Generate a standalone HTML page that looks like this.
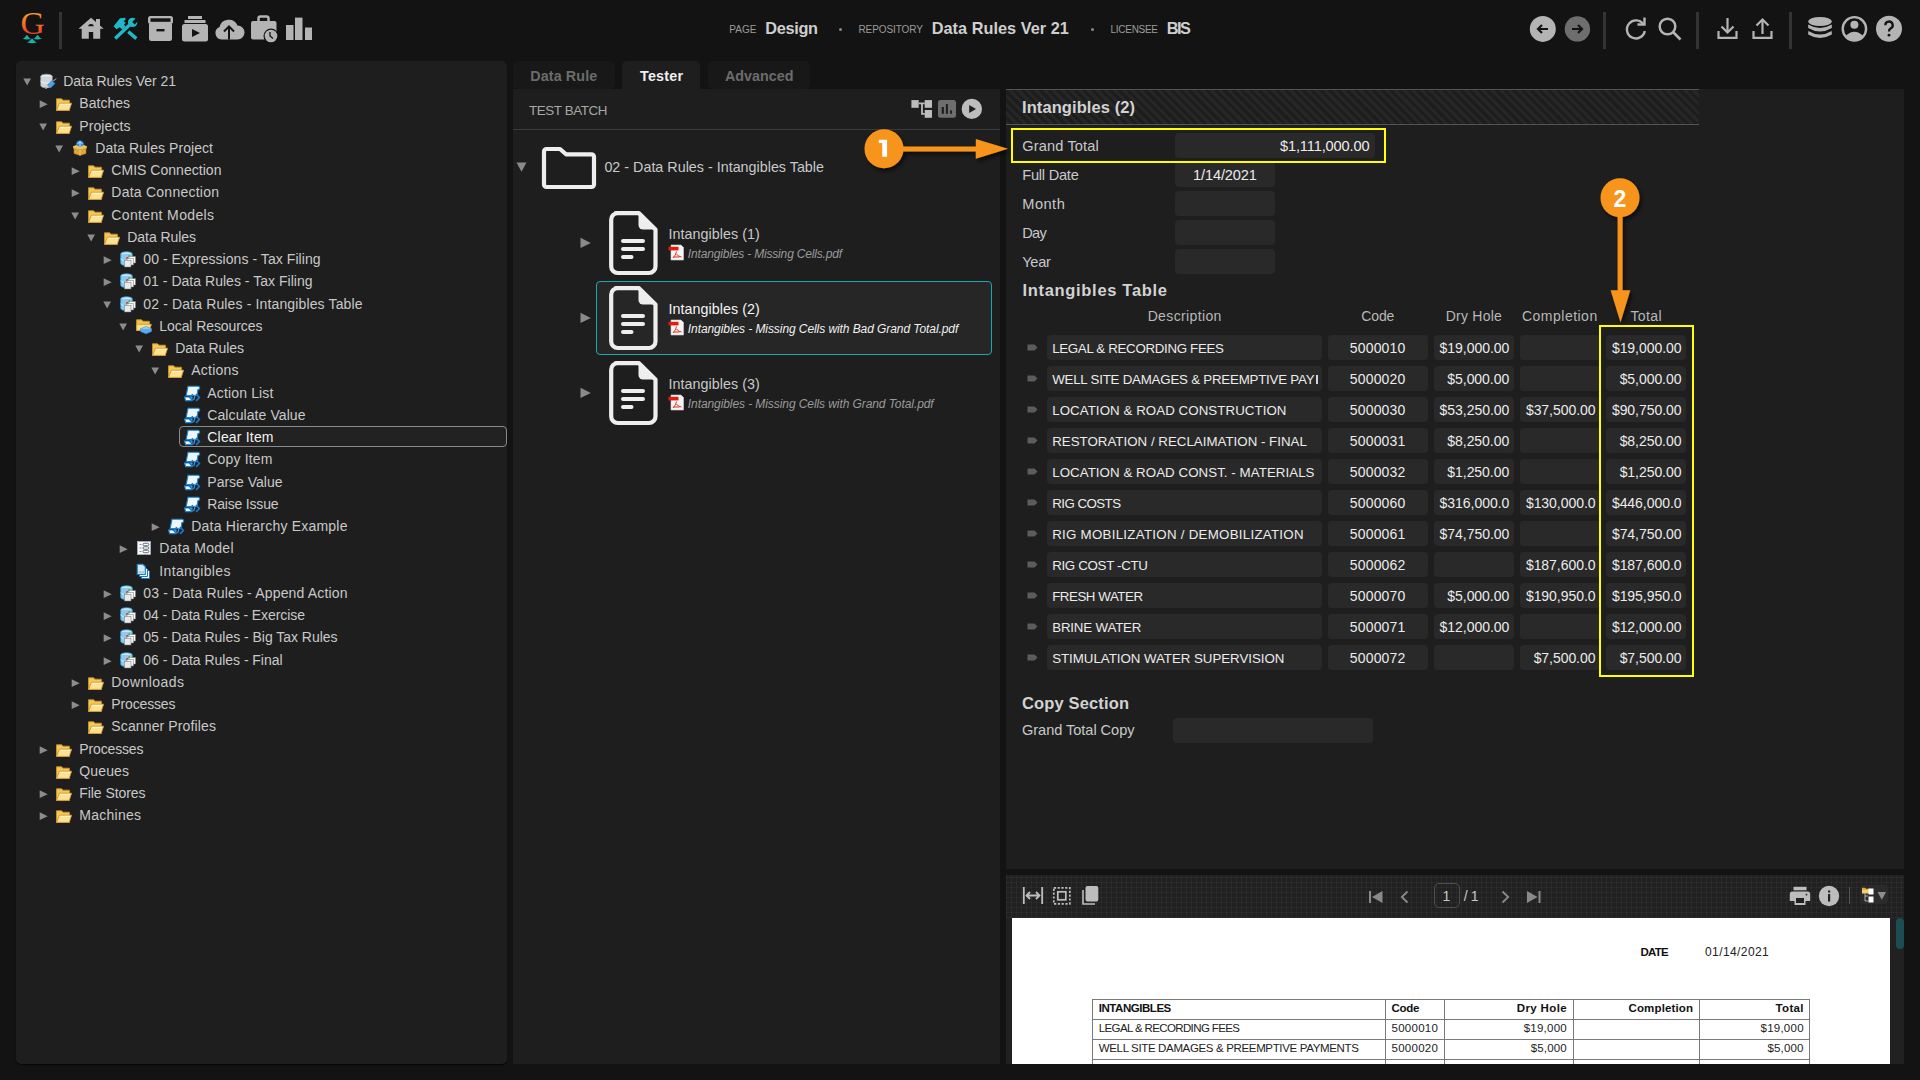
<!DOCTYPE html>
<html><head><meta charset="utf-8"><title>Data Rules</title>
<style>
html,body{margin:0;padding:0;overflow:hidden;background:#131313;}
body{width:1920px;height:1080px;background:#131313;position:relative;overflow:hidden;font-family:"Liberation Sans",sans-serif;}
.a{position:absolute;display:block;}
.t{position:absolute;white-space:pre;line-height:1;}
</style></head><body>
<svg class="a" style="left:16px;top:8px;" width="32" height="40" viewBox="0 0 32 40"><defs><linearGradient id="gg" x1="0" y1="0" x2="0" y2="1"><stop offset="0.15" stop-color="#f7a81e"/><stop offset="0.6" stop-color="#f3622a"/><stop offset="0.95" stop-color="#ea2622"/></linearGradient></defs>
<text transform="translate(4.4,25.8) scale(1.05,1)" x="0" y="0" font-family="Liberation Serif" font-size="32" fill="url(#gg)">G</text>
<path d="M6.5,30.8 C9,30.3 10,27.2 10.9,27 C11.8,27.2 12.8,30.3 15.2,30.8 C12,31.7 9.5,31.7 6.5,30.8Z M17.2,30.8 C19.7,30.3 20.7,27.2 21.6,27 C22.5,27.2 23.5,30.3 26.1,30.8 C22.9,31.7 20.4,31.7 17.2,30.8Z M10.9,34.6 C13.6,34.1 14.9,30.8 16,30.6 C17.1,30.8 18.4,34.1 21.1,34.6 C17.7,35.5 14.3,35.5 10.9,34.6Z" fill="#13b3aa"/></svg>
<div class="a" style="left:59px;top:12px;width:3px;height:37px;background:#333;"></div>
<svg class="a" style="left:78px;top:17px;" width="26" height="23" viewBox="0 0 26 23"><path d="M13,0.8 L18,5.09 V2 H22 V8.5 L25.7,11.7 H22.2 V21.8 H15.2 V15 H10.8 V21.8 H3.7 V11.7 H0.5 Z" fill="#b4b4b4"/><path d="M10.3,9.3 A2.7,2.2 0 0 1 15.7,9.3 Z" fill="#131313"/></svg>
<svg class="a" style="left:113px;top:17px;" width="25" height="24" viewBox="0 0 25 24"><g stroke="#20b8c9" stroke-width="3.4" stroke-linecap="butt" fill="none">
<path d="M2.2,21.6 L16.5,8"/><path d="M15.3,14.6 L23.3,21.6"/></g>
<circle cx="19.6" cy="5.4" r="4.7" fill="#20b8c9"/><path d="M19.2,4.9 L23.5,0.6 L26,3.1 L21.7,7.4Z" fill="#131313"/>
<path d="M0.6,9.3 L7,1.2 L12.3,0.8 L12.6,2.6 L10.6,4.2 L12.6,5.7 L11,7.8 L12.6,9.5 L9.5,12.4 L6.5,10.2 L3.5,12.2Z" fill="#20b8c9"/></svg>
<svg class="a" style="left:147px;top:15px;" width="27" height="28" viewBox="0 0 27 28"><rect x="1" y="1" width="25" height="8" rx="2.5" fill="#b4b4b4"/><rect x="3.5" y="3.3" width="20" height="3.5" fill="#131313"/><path d="M2,8.5 h23 v15 a2.5,2.5 0 0 1 -2.5,2.5 h-18 a2.5,2.5 0 0 1 -2.5,-2.5z" fill="#b4b4b4"/><rect x="9.5" y="14" width="8" height="2.4" fill="#131313"/></svg>
<svg class="a" style="left:181px;top:15px;" width="28" height="28" viewBox="0 0 28 28"><rect x="7" y="1" width="14" height="3" fill="#b4b4b4"/><rect x="3.5" y="5" width="21" height="3" fill="#b4b4b4"/><rect x="1" y="9" width="26" height="17.5" rx="2.5" fill="#b4b4b4"/><path d="M11,14 L19,18 L11,22Z" fill="#131313"/></svg>
<svg class="a" style="left:214px;top:17px;" width="31" height="24" viewBox="0 0 31 24"><path d="M7.5,22.5 A6.5,6.5 0 0 1 5.5,10 A9.5,9.5 0 0 1 23.5,8.5 A6.8,6.8 0 0 1 23.5,22.5 Z" fill="#b4b4b4"/><path d="M15,22.5 V10" stroke="#131313" stroke-width="2"/><path d="M10,14.5 L15,9.5 L20,14.5" stroke="#131313" stroke-width="2" fill="none"/></svg>
<svg class="a" style="left:250px;top:15px;" width="29" height="29" viewBox="0 0 29 29"><path d="M8.5,6 V3.5 a2,2 0 0 1 2,-2 h6 a2,2 0 0 1 2,2 V6" stroke="#b4b4b4" stroke-width="2.5" fill="none"/><rect x="1" y="6" width="25.5" height="18.5" rx="2" fill="#b4b4b4"/><circle cx="21" cy="21" r="7.5" fill="#131313"/><circle cx="21" cy="21" r="6.3" fill="#b4b4b4"/><path d="M20,17 L20,21 L23,23.5" stroke="#131313" stroke-width="1.3" fill="none"/></svg>
<svg class="a" style="left:285px;top:17px;" width="28" height="24" viewBox="0 0 28 24"><rect x="1" y="8" width="7.5" height="15" fill="#b4b4b4"/><rect x="10" y="0.6" width="7.5" height="22.4" fill="#b4b4b4"/><rect x="20" y="10.5" width="7" height="12.5" fill="#b4b4b4"/></svg>
<div class="t" style="left:729.20px;top:24.54px;font-size:10px;color:#9c9c9c;letter-spacing:0.067px;">PAGE</div>
<div class="t" style="left:765.20px;top:20.20px;font-size:16.3px;color:#cfcfcf;font-weight:700;letter-spacing:-0.296px;">Design</div>
<div class="a" style="left:838.5px;top:28px;width:3px;height:3px;background:#888;border-radius:50%;"></div>
<div class="t" style="left:858.50px;top:24.54px;font-size:10px;color:#9c9c9c;letter-spacing:-0.100px;">REPOSITORY</div>
<div class="t" style="left:931.70px;top:20.20px;font-size:16.3px;color:#cfcfcf;font-weight:700;letter-spacing:0.034px;">Data Rules Ver 21</div>
<div class="a" style="left:1090.5px;top:28px;width:3px;height:3px;background:#888;border-radius:50%;"></div>
<div class="t" style="left:1110.60px;top:24.54px;font-size:10px;color:#9c9c9c;letter-spacing:-0.300px;">LICENSEE</div>
<div class="t" style="left:1166.70px;top:20.20px;font-size:16.3px;color:#cfcfcf;font-weight:700;letter-spacing:-1.460px;">BIS</div>
<svg class="a" style="left:1529px;top:15px;" width="28" height="28" viewBox="0 0 28 28"><circle cx="13.8" cy="13.9" r="13" fill="#b4b4b4"/><path d="M19,14 H9.5 M13,10 L9,14 L13,18" stroke="#131313" stroke-width="2.2" fill="none"/></svg>
<svg class="a" style="left:1564px;top:15px;" width="28" height="28" viewBox="0 0 28 28"><circle cx="13.4" cy="13.9" r="12.7" fill="#6e6e6e"/><path d="M8,14 H17.5 M14,10 L18,14 L14,18" stroke="#131313" stroke-width="2.2" fill="none"/></svg>
<div class="a" style="left:1603px;top:12px;width:3px;height:37px;background:#333;"></div>
<svg class="a" style="left:1623px;top:16px;" width="26" height="26" viewBox="0 0 26 26"><path d="M20.5,8.5 A9,9 0 1 0 21.8,15" stroke="#b4b4b4" stroke-width="2.4" fill="none"/><path d="M14.5,8.5 H21.5 V1.5" stroke="#b4b4b4" stroke-width="2.4" fill="none"/></svg>
<svg class="a" style="left:1657px;top:16px;" width="26" height="26" viewBox="0 0 26 26"><circle cx="10.5" cy="10.5" r="7.8" stroke="#b4b4b4" stroke-width="2.5" fill="none"/><path d="M16,16 L23.5,23.5" stroke="#b4b4b4" stroke-width="2.6"/></svg>
<div class="a" style="left:1696px;top:12px;width:3px;height:37px;background:#333;"></div>
<svg class="a" style="left:1716px;top:17px;" width="24" height="24" viewBox="0 0 24 24"><path d="M11.5,1 V15" stroke="#b4b4b4" stroke-width="2.2"/><path d="M5.5,9.5 L11.5,15.5 L17.5,9.5" stroke="#b4b4b4" stroke-width="2.2" fill="none"/><path d="M2.5,14 V20.8 H20.5 V14" stroke="#b4b4b4" stroke-width="2.2" fill="none"/></svg>
<svg class="a" style="left:1751px;top:17px;" width="24" height="24" viewBox="0 0 24 24"><path d="M11.5,3 V17" stroke="#b4b4b4" stroke-width="2.2"/><path d="M5.5,8.5 L11.5,2.5 L17.5,8.5" stroke="#b4b4b4" stroke-width="2.2" fill="none"/><path d="M2.5,14 V20.8 H20.5 V14" stroke="#b4b4b4" stroke-width="2.2" fill="none"/></svg>
<div class="a" style="left:1789px;top:12px;width:3px;height:37px;background:#333;"></div>
<svg class="a" style="left:1807px;top:16px;" width="27" height="26" viewBox="0 0 27 26"><ellipse cx="13" cy="5.5" rx="11.8" ry="4.6" fill="#b4b4b4"/><path d="M1.2,8.5 Q13,15.5 24.8,8.5 V12 Q13,19 1.2,12Z" fill="#b4b4b4"/><path d="M1.2,15 Q13,22 24.8,15 V18.5 Q13,25.5 1.2,18.5Z" fill="#b4b4b4"/></svg>
<svg class="a" style="left:1841px;top:15px;" width="28" height="28" viewBox="0 0 28 28"><circle cx="13.4" cy="13.8" r="11.7" stroke="#b4b4b4" stroke-width="2.4" fill="none"/><circle cx="13.4" cy="9.8" r="4" fill="#b4b4b4"/><path d="M4.5,21 Q13.4,12.5 22.3,21 A11.2,11.2 0 0 1 4.5,21Z" fill="#b4b4b4"/></svg>
<svg class="a" style="left:1875px;top:15px;" width="28" height="28" viewBox="0 0 28 28"><circle cx="14" cy="13.8" r="13" fill="#b4b4b4"/><path d="M10.3,10.3 A3.7,3.7 0 1 1 15.5,13.6 Q14,14.5 14,16.5" stroke="#131313" stroke-width="2.3" fill="none"/><circle cx="14" cy="20.2" r="1.4" fill="#131313"/></svg>
<div class="a" style="left:16px;top:61px;width:491px;height:1003px;background:#1e1e1e;border-radius:5px;box-shadow:0 1px 1px rgba(0,0,0,0.7);"></div>
<svg class="a" style="left:23px;top:78.0px;" width="9" height="8" viewBox="0 0 9 8"><path d="M0.3,0.5 H8 L4.15,7.5Z" fill="#8c8c8c"/></svg>
<svg class="a" style="left:40px;top:73.0px;" width="17" height="17" viewBox="0 0 17 17"><ellipse cx="6.5" cy="3.5" rx="5.8" ry="2.3" fill="#e9ecef" stroke="#9aa3ab" stroke-width="0.6"/>
<path d="M0.7,3.5 V12.5 A5.8,2.3 0 0 0 12.3,12.5 V3.5" fill="#cfd5da" stroke="#9aa3ab" stroke-width="0.6"/>
<path d="M0.7,7.8 A5.8,2.3 0 0 0 12.3,7.8" fill="none" stroke="#f3f5f7" stroke-width="0.9"/>
<path d="M7.5,12 L12,7.5 L15,10.5 L10.5,15Z" fill="#4aa3e6" stroke="#2b6fb0" stroke-width="0.6"/><path d="M13.5,8 L16,5.5 M7.5,14 L5.5,16" stroke="#cfd5da" stroke-width="1"/></svg>
<div class="t" style="left:63.30px;top:74.05px;font-size:14px;color:#c9c9c9;letter-spacing:-0.061px;">Data Rules Ver 21</div>
<svg class="a" style="left:38.5px;top:100.25px;" width="9" height="9" viewBox="0 0 9 9"><path d="M0.7,0.3 L8.7,4.15 L0.7,8Z" fill="#8c8c8c"/></svg>
<svg class="a" style="left:56px;top:95.25px;" width="17" height="17" viewBox="0 0 17 17"><path d="M0.5,3.8 H5.6 L6.9,5.2 H13.4 V15.4 H0.5Z" fill="#f3c95a" stroke="#cf8f28" stroke-width="0.9"/>
<path d="M3.4,8.2 H15.6 L13.2,15.4 H0.5Z" fill="#fbe394" stroke="#cf9330" stroke-width="0.9"/><path d="M3.9,9.3 H14.6" stroke="#fff7d6" stroke-width="0.9"/></svg>
<div class="t" style="left:79.30px;top:96.30px;font-size:14px;color:#c9c9c9;letter-spacing:0.027px;">Batches</div>
<svg class="a" style="left:39px;top:122.5px;" width="9" height="8" viewBox="0 0 9 8"><path d="M0.3,0.5 H8 L4.15,7.5Z" fill="#8c8c8c"/></svg>
<svg class="a" style="left:56px;top:117.5px;" width="17" height="17" viewBox="0 0 17 17"><path d="M0.5,3.8 H5.6 L6.9,5.2 H13.4 V15.4 H0.5Z" fill="#f3c95a" stroke="#cf8f28" stroke-width="0.9"/>
<path d="M3.4,8.2 H15.6 L13.2,15.4 H0.5Z" fill="#fbe394" stroke="#cf9330" stroke-width="0.9"/><path d="M3.9,9.3 H14.6" stroke="#fff7d6" stroke-width="0.9"/></svg>
<div class="t" style="left:79.30px;top:118.55px;font-size:14px;color:#c9c9c9;letter-spacing:0.094px;">Projects</div>
<svg class="a" style="left:55px;top:144.75px;" width="9" height="8" viewBox="0 0 9 8"><path d="M0.3,0.5 H8 L4.15,7.5Z" fill="#8c8c8c"/></svg>
<svg class="a" style="left:72px;top:139.75px;" width="17" height="17" viewBox="0 0 17 17"><circle cx="8" cy="4.3" r="3.8" fill="#2f8ee0" stroke="#1b5fa8" stroke-width="0.5"/><path d="M5.5,3.5 Q8,1 10.5,3.5 M8,1 V7" stroke="#d8f0ff" stroke-width="0.8" fill="none"/>
<path d="M0.8,6.5 L4,5 L8,7 L12,5 L15.2,6.5 L14,9.5 L8,11 L2,9.5Z" fill="#f3c15a"/>
<path d="M2,8.5 L8,10 L14,8.5 V13.5 L8,15.5 L2,13.5Z" fill="#dfa43a" stroke="#b9812a" stroke-width="0.5"/><path d="M8,10 V15.5" stroke="#f6d585" stroke-width="0.8"/></svg>
<div class="t" style="left:95.30px;top:140.80px;font-size:14px;color:#c9c9c9;letter-spacing:0.055px;">Data Rules Project</div>
<svg class="a" style="left:70.5px;top:167.0px;" width="9" height="9" viewBox="0 0 9 9"><path d="M0.7,0.3 L8.7,4.15 L0.7,8Z" fill="#8c8c8c"/></svg>
<svg class="a" style="left:88px;top:162.0px;" width="17" height="17" viewBox="0 0 17 17"><path d="M0.5,3.8 H5.6 L6.9,5.2 H13.4 V15.4 H0.5Z" fill="#f3c95a" stroke="#cf8f28" stroke-width="0.9"/>
<path d="M3.4,8.2 H15.6 L13.2,15.4 H0.5Z" fill="#fbe394" stroke="#cf9330" stroke-width="0.9"/><path d="M3.9,9.3 H14.6" stroke="#fff7d6" stroke-width="0.9"/></svg>
<div class="t" style="left:111.30px;top:163.05px;font-size:14px;color:#c9c9c9;letter-spacing:0.031px;">CMIS Connection</div>
<svg class="a" style="left:70.5px;top:189.25px;" width="9" height="9" viewBox="0 0 9 9"><path d="M0.7,0.3 L8.7,4.15 L0.7,8Z" fill="#8c8c8c"/></svg>
<svg class="a" style="left:88px;top:184.25px;" width="17" height="17" viewBox="0 0 17 17"><path d="M0.5,3.8 H5.6 L6.9,5.2 H13.4 V15.4 H0.5Z" fill="#f3c95a" stroke="#cf8f28" stroke-width="0.9"/>
<path d="M3.4,8.2 H15.6 L13.2,15.4 H0.5Z" fill="#fbe394" stroke="#cf9330" stroke-width="0.9"/><path d="M3.9,9.3 H14.6" stroke="#fff7d6" stroke-width="0.9"/></svg>
<div class="t" style="left:111.30px;top:185.30px;font-size:14px;color:#c9c9c9;letter-spacing:0.243px;">Data Connection</div>
<svg class="a" style="left:71px;top:211.5px;" width="9" height="8" viewBox="0 0 9 8"><path d="M0.3,0.5 H8 L4.15,7.5Z" fill="#8c8c8c"/></svg>
<svg class="a" style="left:88px;top:206.5px;" width="17" height="17" viewBox="0 0 17 17"><path d="M0.5,3.8 H5.6 L6.9,5.2 H13.4 V15.4 H0.5Z" fill="#f3c95a" stroke="#cf8f28" stroke-width="0.9"/>
<path d="M3.4,8.2 H15.6 L13.2,15.4 H0.5Z" fill="#fbe394" stroke="#cf9330" stroke-width="0.9"/><path d="M3.9,9.3 H14.6" stroke="#fff7d6" stroke-width="0.9"/></svg>
<div class="t" style="left:111.30px;top:207.55px;font-size:14px;color:#c9c9c9;letter-spacing:0.362px;">Content Models</div>
<svg class="a" style="left:87px;top:233.75px;" width="9" height="8" viewBox="0 0 9 8"><path d="M0.3,0.5 H8 L4.15,7.5Z" fill="#8c8c8c"/></svg>
<svg class="a" style="left:104px;top:228.75px;" width="17" height="17" viewBox="0 0 17 17"><path d="M0.5,3.8 H5.6 L6.9,5.2 H13.4 V15.4 H0.5Z" fill="#f3c95a" stroke="#cf8f28" stroke-width="0.9"/>
<path d="M3.4,8.2 H15.6 L13.2,15.4 H0.5Z" fill="#fbe394" stroke="#cf9330" stroke-width="0.9"/><path d="M3.9,9.3 H14.6" stroke="#fff7d6" stroke-width="0.9"/></svg>
<div class="t" style="left:127.30px;top:229.80px;font-size:14px;color:#c9c9c9;letter-spacing:-0.067px;">Data Rules</div>
<svg class="a" style="left:102.5px;top:256.0px;" width="9" height="9" viewBox="0 0 9 9"><path d="M0.7,0.3 L8.7,4.15 L0.7,8Z" fill="#8c8c8c"/></svg>
<svg class="a" style="left:120px;top:251.0px;" width="17" height="17" viewBox="0 0 17 17"><ellipse cx="6.5" cy="3" rx="5.8" ry="2.3" fill="#c6e6f7" stroke="#2f95d0" stroke-width="0.8"/>
<path d="M0.7,3 V12.3 A5.8,2.3 0 0 0 12.3,12.3 V3" fill="#8ccbee" stroke="#2f95d0" stroke-width="0.8"/>
<path d="M0.7,7.5 A5.8,2.3 0 0 0 12.3,7.5" fill="none" stroke="#d6f0fb" stroke-width="0.8"/>
<rect x="9" y="5.5" width="6.5" height="6.5" fill="#fafafa" stroke="#777" stroke-width="0.5"/><rect x="7" y="7.5" width="6.5" height="6.5" fill="#f4f4f4" stroke="#777" stroke-width="0.5"/><rect x="4.5" y="9.5" width="6.5" height="6.5" fill="#eaeaea" stroke="#777" stroke-width="0.5"/>
<path d="M6,7.5 L8,6.3" stroke="#e0301e" stroke-width="1.2"/><path d="M8.3,5.3 L10,4.6" stroke="#46b02c" stroke-width="1.1"/></svg>
<div class="t" style="left:143.30px;top:252.05px;font-size:14px;color:#c9c9c9;letter-spacing:0.059px;">00 - Expressions - Tax Filing</div>
<svg class="a" style="left:102.5px;top:278.25px;" width="9" height="9" viewBox="0 0 9 9"><path d="M0.7,0.3 L8.7,4.15 L0.7,8Z" fill="#8c8c8c"/></svg>
<svg class="a" style="left:120px;top:273.25px;" width="17" height="17" viewBox="0 0 17 17"><ellipse cx="6.5" cy="3" rx="5.8" ry="2.3" fill="#c6e6f7" stroke="#2f95d0" stroke-width="0.8"/>
<path d="M0.7,3 V12.3 A5.8,2.3 0 0 0 12.3,12.3 V3" fill="#8ccbee" stroke="#2f95d0" stroke-width="0.8"/>
<path d="M0.7,7.5 A5.8,2.3 0 0 0 12.3,7.5" fill="none" stroke="#d6f0fb" stroke-width="0.8"/>
<rect x="9" y="5.5" width="6.5" height="6.5" fill="#fafafa" stroke="#777" stroke-width="0.5"/><rect x="7" y="7.5" width="6.5" height="6.5" fill="#f4f4f4" stroke="#777" stroke-width="0.5"/><rect x="4.5" y="9.5" width="6.5" height="6.5" fill="#eaeaea" stroke="#777" stroke-width="0.5"/>
<path d="M6,7.5 L8,6.3" stroke="#e0301e" stroke-width="1.2"/><path d="M8.3,5.3 L10,4.6" stroke="#46b02c" stroke-width="1.1"/></svg>
<div class="t" style="left:143.30px;top:274.30px;font-size:14px;color:#c9c9c9;letter-spacing:0.024px;">01 - Data Rules - Tax Filing</div>
<svg class="a" style="left:103px;top:300.5px;" width="9" height="8" viewBox="0 0 9 8"><path d="M0.3,0.5 H8 L4.15,7.5Z" fill="#8c8c8c"/></svg>
<svg class="a" style="left:120px;top:295.5px;" width="17" height="17" viewBox="0 0 17 17"><ellipse cx="6.5" cy="3" rx="5.8" ry="2.3" fill="#c6e6f7" stroke="#2f95d0" stroke-width="0.8"/>
<path d="M0.7,3 V12.3 A5.8,2.3 0 0 0 12.3,12.3 V3" fill="#8ccbee" stroke="#2f95d0" stroke-width="0.8"/>
<path d="M0.7,7.5 A5.8,2.3 0 0 0 12.3,7.5" fill="none" stroke="#d6f0fb" stroke-width="0.8"/>
<rect x="9" y="5.5" width="6.5" height="6.5" fill="#fafafa" stroke="#777" stroke-width="0.5"/><rect x="7" y="7.5" width="6.5" height="6.5" fill="#f4f4f4" stroke="#777" stroke-width="0.5"/><rect x="4.5" y="9.5" width="6.5" height="6.5" fill="#eaeaea" stroke="#777" stroke-width="0.5"/>
<path d="M6,7.5 L8,6.3" stroke="#e0301e" stroke-width="1.2"/><path d="M8.3,5.3 L10,4.6" stroke="#46b02c" stroke-width="1.1"/></svg>
<div class="t" style="left:143.30px;top:296.55px;font-size:14px;color:#c9c9c9;letter-spacing:0.139px;">02 - Data Rules - Intangibles Table</div>
<svg class="a" style="left:119px;top:322.75px;" width="9" height="8" viewBox="0 0 9 8"><path d="M0.3,0.5 H8 L4.15,7.5Z" fill="#8c8c8c"/></svg>
<svg class="a" style="left:136px;top:317.75px;" width="17" height="17" viewBox="0 0 17 17"><path d="M0.6,1.8 H5.6 L7,3.3 H13.4 V12.4 H0.6Z" fill="#f1c250" stroke="#c98f2a" stroke-width="0.9"/>
<path d="M0.6,6.3 H15.4 L13.4,12.4 H0.6Z" fill="#fbe08c" stroke="#d39a31" stroke-width="0.9"/>
<path d="M10,8.5 L15.5,10.8 L10,13.2 L4.5,10.8Z" fill="#9fd2f6" stroke="#3c8fd6" stroke-width="0.6"/><path d="M4.5,10.8 V13.5 L10,15.8 L15.5,13.5 V10.8" fill="#5aaef0" stroke="#3c8fd6" stroke-width="0.6"/></svg>
<div class="t" style="left:159.30px;top:318.80px;font-size:14px;color:#c9c9c9;letter-spacing:-0.079px;">Local Resources</div>
<svg class="a" style="left:135px;top:345.0px;" width="9" height="8" viewBox="0 0 9 8"><path d="M0.3,0.5 H8 L4.15,7.5Z" fill="#8c8c8c"/></svg>
<svg class="a" style="left:152px;top:340.0px;" width="17" height="17" viewBox="0 0 17 17"><path d="M0.5,3.8 H5.6 L6.9,5.2 H13.4 V15.4 H0.5Z" fill="#f3c95a" stroke="#cf8f28" stroke-width="0.9"/>
<path d="M3.4,8.2 H15.6 L13.2,15.4 H0.5Z" fill="#fbe394" stroke="#cf9330" stroke-width="0.9"/><path d="M3.9,9.3 H14.6" stroke="#fff7d6" stroke-width="0.9"/></svg>
<div class="t" style="left:175.30px;top:341.05px;font-size:14px;color:#c9c9c9;letter-spacing:-0.067px;">Data Rules</div>
<svg class="a" style="left:151px;top:367.25px;" width="9" height="8" viewBox="0 0 9 8"><path d="M0.3,0.5 H8 L4.15,7.5Z" fill="#8c8c8c"/></svg>
<svg class="a" style="left:168px;top:362.25px;" width="17" height="17" viewBox="0 0 17 17"><path d="M0.5,3.8 H5.6 L6.9,5.2 H13.4 V15.4 H0.5Z" fill="#f3c95a" stroke="#cf8f28" stroke-width="0.9"/>
<path d="M3.4,8.2 H15.6 L13.2,15.4 H0.5Z" fill="#fbe394" stroke="#cf9330" stroke-width="0.9"/><path d="M3.9,9.3 H14.6" stroke="#fff7d6" stroke-width="0.9"/></svg>
<div class="t" style="left:191.30px;top:363.30px;font-size:14px;color:#c9c9c9;letter-spacing:0.213px;">Actions</div>
<svg class="a" style="left:184px;top:384.5px;" width="17" height="17" viewBox="0 0 17 17"><path d="M4,1.3 H14.5 Q16.2,2 15.6,3.9 L13.9,4.6 L13.1,10.5 H2.2 Z" fill="#eef5fb" stroke="#1c86d6" stroke-width="1.1"/>
<path d="M0.6,12 H8.2 L7.6,15.6 H1.6Z" fill="#f4f8fc" stroke="#1c86d6" stroke-width="1.1"/>
<path d="M8.9,9.2 L5.9,12.5 L8.9,15.8 M12.1,9.2 L15.3,12.5 L12.1,15.8" stroke="#1a78c8" stroke-width="1.7" fill="none"/>
<path d="M9.7,15.2 L11.3,9.6" stroke="#4aa6e6" stroke-width="1.1"/></svg>
<div class="t" style="left:207.30px;top:385.55px;font-size:14px;color:#c9c9c9;letter-spacing:0.152px;">Action List</div>
<svg class="a" style="left:184px;top:406.75px;" width="17" height="17" viewBox="0 0 17 17"><path d="M4,1.3 H14.5 Q16.2,2 15.6,3.9 L13.9,4.6 L13.1,10.5 H2.2 Z" fill="#eef5fb" stroke="#1c86d6" stroke-width="1.1"/>
<path d="M0.6,12 H8.2 L7.6,15.6 H1.6Z" fill="#f4f8fc" stroke="#1c86d6" stroke-width="1.1"/>
<path d="M8.9,9.2 L5.9,12.5 L8.9,15.8 M12.1,9.2 L15.3,12.5 L12.1,15.8" stroke="#1a78c8" stroke-width="1.7" fill="none"/>
<path d="M9.7,15.2 L11.3,9.6" stroke="#4aa6e6" stroke-width="1.1"/></svg>
<div class="t" style="left:207.30px;top:407.80px;font-size:14px;color:#c9c9c9;letter-spacing:0.084px;">Calculate Value</div>
<div class="a" style="left:179px;top:426.0px;width:328px;height:21px;background:#222;border:1px solid #8a8a8a;border-radius:4px;box-sizing:border-box;"></div>
<svg class="a" style="left:184px;top:429.0px;" width="17" height="17" viewBox="0 0 17 17"><path d="M4,1.3 H14.5 Q16.2,2 15.6,3.9 L13.9,4.6 L13.1,10.5 H2.2 Z" fill="#eef5fb" stroke="#1c86d6" stroke-width="1.1"/>
<path d="M0.6,12 H8.2 L7.6,15.6 H1.6Z" fill="#f4f8fc" stroke="#1c86d6" stroke-width="1.1"/>
<path d="M8.9,9.2 L5.9,12.5 L8.9,15.8 M12.1,9.2 L15.3,12.5 L12.1,15.8" stroke="#1a78c8" stroke-width="1.7" fill="none"/>
<path d="M9.7,15.2 L11.3,9.6" stroke="#4aa6e6" stroke-width="1.1"/></svg>
<div class="t" style="left:207.30px;top:430.05px;font-size:14px;color:#f2f2f2;letter-spacing:0.184px;">Clear Item</div>
<svg class="a" style="left:184px;top:451.25px;" width="17" height="17" viewBox="0 0 17 17"><path d="M4,1.3 H14.5 Q16.2,2 15.6,3.9 L13.9,4.6 L13.1,10.5 H2.2 Z" fill="#eef5fb" stroke="#1c86d6" stroke-width="1.1"/>
<path d="M0.6,12 H8.2 L7.6,15.6 H1.6Z" fill="#f4f8fc" stroke="#1c86d6" stroke-width="1.1"/>
<path d="M8.9,9.2 L5.9,12.5 L8.9,15.8 M12.1,9.2 L15.3,12.5 L12.1,15.8" stroke="#1a78c8" stroke-width="1.7" fill="none"/>
<path d="M9.7,15.2 L11.3,9.6" stroke="#4aa6e6" stroke-width="1.1"/></svg>
<div class="t" style="left:207.30px;top:452.30px;font-size:14px;color:#c9c9c9;letter-spacing:0.170px;">Copy Item</div>
<svg class="a" style="left:184px;top:473.5px;" width="17" height="17" viewBox="0 0 17 17"><path d="M4,1.3 H14.5 Q16.2,2 15.6,3.9 L13.9,4.6 L13.1,10.5 H2.2 Z" fill="#eef5fb" stroke="#1c86d6" stroke-width="1.1"/>
<path d="M0.6,12 H8.2 L7.6,15.6 H1.6Z" fill="#f4f8fc" stroke="#1c86d6" stroke-width="1.1"/>
<path d="M8.9,9.2 L5.9,12.5 L8.9,15.8 M12.1,9.2 L15.3,12.5 L12.1,15.8" stroke="#1a78c8" stroke-width="1.7" fill="none"/>
<path d="M9.7,15.2 L11.3,9.6" stroke="#4aa6e6" stroke-width="1.1"/></svg>
<div class="t" style="left:207.30px;top:474.55px;font-size:14px;color:#c9c9c9;letter-spacing:0.002px;">Parse Value</div>
<svg class="a" style="left:184px;top:495.75px;" width="17" height="17" viewBox="0 0 17 17"><path d="M4,1.3 H14.5 Q16.2,2 15.6,3.9 L13.9,4.6 L13.1,10.5 H2.2 Z" fill="#eef5fb" stroke="#1c86d6" stroke-width="1.1"/>
<path d="M0.6,12 H8.2 L7.6,15.6 H1.6Z" fill="#f4f8fc" stroke="#1c86d6" stroke-width="1.1"/>
<path d="M8.9,9.2 L5.9,12.5 L8.9,15.8 M12.1,9.2 L15.3,12.5 L12.1,15.8" stroke="#1a78c8" stroke-width="1.7" fill="none"/>
<path d="M9.7,15.2 L11.3,9.6" stroke="#4aa6e6" stroke-width="1.1"/></svg>
<div class="t" style="left:207.30px;top:496.80px;font-size:14px;color:#c9c9c9;letter-spacing:-0.188px;">Raise Issue</div>
<svg class="a" style="left:150.5px;top:523.0px;" width="9" height="9" viewBox="0 0 9 9"><path d="M0.7,0.3 L8.7,4.15 L0.7,8Z" fill="#8c8c8c"/></svg>
<svg class="a" style="left:168px;top:518.0px;" width="17" height="17" viewBox="0 0 17 17"><path d="M4,1.3 H14.5 Q16.2,2 15.6,3.9 L13.9,4.6 L13.1,10.5 H2.2 Z" fill="#eef5fb" stroke="#1c86d6" stroke-width="1.1"/>
<path d="M0.6,12 H8.2 L7.6,15.6 H1.6Z" fill="#f4f8fc" stroke="#1c86d6" stroke-width="1.1"/>
<path d="M8.9,9.2 L5.9,12.5 L8.9,15.8 M12.1,9.2 L15.3,12.5 L12.1,15.8" stroke="#1a78c8" stroke-width="1.7" fill="none"/>
<path d="M9.7,15.2 L11.3,9.6" stroke="#4aa6e6" stroke-width="1.1"/></svg>
<div class="t" style="left:191.30px;top:519.05px;font-size:14px;color:#c9c9c9;letter-spacing:0.211px;">Data Hierarchy Example</div>
<svg class="a" style="left:118.5px;top:545.25px;" width="9" height="9" viewBox="0 0 9 9"><path d="M0.7,0.3 L8.7,4.15 L0.7,8Z" fill="#8c8c8c"/></svg>
<svg class="a" style="left:136px;top:540.25px;" width="17" height="17" viewBox="0 0 17 17"><rect x="1.5" y="1.5" width="13" height="13" fill="#f7f9fc" stroke="#aab4c3" stroke-width="0.8"/>
<g stroke="#8b8f96" stroke-width="1"><path d="M3.5,4.5 H5.5 M3.5,8 H5.5 M3.5,11.5 H5.5"/></g>
<g stroke="#4f5d70" stroke-width="0.9" fill="#fff"><rect x="7" y="3.3" width="5.8" height="2.4" rx="1.2"/><rect x="7" y="6.8" width="5.8" height="2.4" rx="1.2"/><rect x="7" y="10.3" width="5.8" height="2.4" rx="1.2"/></g></svg>
<div class="t" style="left:159.30px;top:541.30px;font-size:14px;color:#c9c9c9;letter-spacing:0.296px;">Data Model</div>
<svg class="a" style="left:136px;top:562.5px;" width="17" height="17" viewBox="0 0 17 17"><path d="M5.5,6 H11 L13.5,8.5 V15.5 H5.5Z" fill="#fff" stroke="#1677c4" stroke-width="1"/>
<path d="M3.5,4 H9 L11.5,6.5 V13.5 H3.5Z" fill="#fff" stroke="#1677c4" stroke-width="1"/>
<path d="M1.2,1.3 H7 L9.3,3.6 V11.5 H1.2Z" fill="#d3e9f5" stroke="#1677c4" stroke-width="1.1"/><rect x="2.3" y="8.3" width="6" height="2" fill="#9fcbe3"/></svg>
<div class="t" style="left:159.30px;top:563.55px;font-size:14px;color:#c9c9c9;letter-spacing:0.344px;">Intangibles</div>
<svg class="a" style="left:102.5px;top:589.75px;" width="9" height="9" viewBox="0 0 9 9"><path d="M0.7,0.3 L8.7,4.15 L0.7,8Z" fill="#8c8c8c"/></svg>
<svg class="a" style="left:120px;top:584.75px;" width="17" height="17" viewBox="0 0 17 17"><ellipse cx="6.5" cy="3" rx="5.8" ry="2.3" fill="#c6e6f7" stroke="#2f95d0" stroke-width="0.8"/>
<path d="M0.7,3 V12.3 A5.8,2.3 0 0 0 12.3,12.3 V3" fill="#8ccbee" stroke="#2f95d0" stroke-width="0.8"/>
<path d="M0.7,7.5 A5.8,2.3 0 0 0 12.3,7.5" fill="none" stroke="#d6f0fb" stroke-width="0.8"/>
<rect x="9" y="5.5" width="6.5" height="6.5" fill="#fafafa" stroke="#777" stroke-width="0.5"/><rect x="7" y="7.5" width="6.5" height="6.5" fill="#f4f4f4" stroke="#777" stroke-width="0.5"/><rect x="4.5" y="9.5" width="6.5" height="6.5" fill="#eaeaea" stroke="#777" stroke-width="0.5"/>
<path d="M6,7.5 L8,6.3" stroke="#e0301e" stroke-width="1.2"/><path d="M8.3,5.3 L10,4.6" stroke="#46b02c" stroke-width="1.1"/></svg>
<div class="t" style="left:143.30px;top:585.80px;font-size:14px;color:#c9c9c9;letter-spacing:0.166px;">03 - Data Rules - Append Action</div>
<svg class="a" style="left:102.5px;top:612.0px;" width="9" height="9" viewBox="0 0 9 9"><path d="M0.7,0.3 L8.7,4.15 L0.7,8Z" fill="#8c8c8c"/></svg>
<svg class="a" style="left:120px;top:607.0px;" width="17" height="17" viewBox="0 0 17 17"><ellipse cx="6.5" cy="3" rx="5.8" ry="2.3" fill="#c6e6f7" stroke="#2f95d0" stroke-width="0.8"/>
<path d="M0.7,3 V12.3 A5.8,2.3 0 0 0 12.3,12.3 V3" fill="#8ccbee" stroke="#2f95d0" stroke-width="0.8"/>
<path d="M0.7,7.5 A5.8,2.3 0 0 0 12.3,7.5" fill="none" stroke="#d6f0fb" stroke-width="0.8"/>
<rect x="9" y="5.5" width="6.5" height="6.5" fill="#fafafa" stroke="#777" stroke-width="0.5"/><rect x="7" y="7.5" width="6.5" height="6.5" fill="#f4f4f4" stroke="#777" stroke-width="0.5"/><rect x="4.5" y="9.5" width="6.5" height="6.5" fill="#eaeaea" stroke="#777" stroke-width="0.5"/>
<path d="M6,7.5 L8,6.3" stroke="#e0301e" stroke-width="1.2"/><path d="M8.3,5.3 L10,4.6" stroke="#46b02c" stroke-width="1.1"/></svg>
<div class="t" style="left:143.30px;top:608.05px;font-size:14px;color:#c9c9c9;letter-spacing:-0.067px;">04 - Data Rules - Exercise</div>
<svg class="a" style="left:102.5px;top:634.25px;" width="9" height="9" viewBox="0 0 9 9"><path d="M0.7,0.3 L8.7,4.15 L0.7,8Z" fill="#8c8c8c"/></svg>
<svg class="a" style="left:120px;top:629.25px;" width="17" height="17" viewBox="0 0 17 17"><ellipse cx="6.5" cy="3" rx="5.8" ry="2.3" fill="#c6e6f7" stroke="#2f95d0" stroke-width="0.8"/>
<path d="M0.7,3 V12.3 A5.8,2.3 0 0 0 12.3,12.3 V3" fill="#8ccbee" stroke="#2f95d0" stroke-width="0.8"/>
<path d="M0.7,7.5 A5.8,2.3 0 0 0 12.3,7.5" fill="none" stroke="#d6f0fb" stroke-width="0.8"/>
<rect x="9" y="5.5" width="6.5" height="6.5" fill="#fafafa" stroke="#777" stroke-width="0.5"/><rect x="7" y="7.5" width="6.5" height="6.5" fill="#f4f4f4" stroke="#777" stroke-width="0.5"/><rect x="4.5" y="9.5" width="6.5" height="6.5" fill="#eaeaea" stroke="#777" stroke-width="0.5"/>
<path d="M6,7.5 L8,6.3" stroke="#e0301e" stroke-width="1.2"/><path d="M8.3,5.3 L10,4.6" stroke="#46b02c" stroke-width="1.1"/></svg>
<div class="t" style="left:143.30px;top:630.30px;font-size:14px;color:#c9c9c9;letter-spacing:-0.027px;">05 - Data Rules - Big Tax Rules</div>
<svg class="a" style="left:102.5px;top:656.5px;" width="9" height="9" viewBox="0 0 9 9"><path d="M0.7,0.3 L8.7,4.15 L0.7,8Z" fill="#8c8c8c"/></svg>
<svg class="a" style="left:120px;top:651.5px;" width="17" height="17" viewBox="0 0 17 17"><ellipse cx="6.5" cy="3" rx="5.8" ry="2.3" fill="#c6e6f7" stroke="#2f95d0" stroke-width="0.8"/>
<path d="M0.7,3 V12.3 A5.8,2.3 0 0 0 12.3,12.3 V3" fill="#8ccbee" stroke="#2f95d0" stroke-width="0.8"/>
<path d="M0.7,7.5 A5.8,2.3 0 0 0 12.3,7.5" fill="none" stroke="#d6f0fb" stroke-width="0.8"/>
<rect x="9" y="5.5" width="6.5" height="6.5" fill="#fafafa" stroke="#777" stroke-width="0.5"/><rect x="7" y="7.5" width="6.5" height="6.5" fill="#f4f4f4" stroke="#777" stroke-width="0.5"/><rect x="4.5" y="9.5" width="6.5" height="6.5" fill="#eaeaea" stroke="#777" stroke-width="0.5"/>
<path d="M6,7.5 L8,6.3" stroke="#e0301e" stroke-width="1.2"/><path d="M8.3,5.3 L10,4.6" stroke="#46b02c" stroke-width="1.1"/></svg>
<div class="t" style="left:143.30px;top:652.55px;font-size:14px;color:#c9c9c9;letter-spacing:-0.036px;">06 - Data Rules - Final</div>
<svg class="a" style="left:70.5px;top:678.75px;" width="9" height="9" viewBox="0 0 9 9"><path d="M0.7,0.3 L8.7,4.15 L0.7,8Z" fill="#8c8c8c"/></svg>
<svg class="a" style="left:88px;top:673.75px;" width="17" height="17" viewBox="0 0 17 17"><path d="M0.5,3.8 H5.6 L6.9,5.2 H13.4 V15.4 H0.5Z" fill="#f3c95a" stroke="#cf8f28" stroke-width="0.9"/>
<path d="M3.4,8.2 H15.6 L13.2,15.4 H0.5Z" fill="#fbe394" stroke="#cf9330" stroke-width="0.9"/><path d="M3.9,9.3 H14.6" stroke="#fff7d6" stroke-width="0.9"/></svg>
<div class="t" style="left:111.30px;top:674.80px;font-size:14px;color:#c9c9c9;letter-spacing:0.425px;">Downloads</div>
<svg class="a" style="left:70.5px;top:701.0px;" width="9" height="9" viewBox="0 0 9 9"><path d="M0.7,0.3 L8.7,4.15 L0.7,8Z" fill="#8c8c8c"/></svg>
<svg class="a" style="left:88px;top:696.0px;" width="17" height="17" viewBox="0 0 17 17"><path d="M0.5,3.8 H5.6 L6.9,5.2 H13.4 V15.4 H0.5Z" fill="#f3c95a" stroke="#cf8f28" stroke-width="0.9"/>
<path d="M3.4,8.2 H15.6 L13.2,15.4 H0.5Z" fill="#fbe394" stroke="#cf9330" stroke-width="0.9"/><path d="M3.9,9.3 H14.6" stroke="#fff7d6" stroke-width="0.9"/></svg>
<div class="t" style="left:111.30px;top:697.05px;font-size:14px;color:#c9c9c9;letter-spacing:-0.147px;">Processes</div>
<svg class="a" style="left:88px;top:718.25px;" width="17" height="17" viewBox="0 0 17 17"><path d="M0.5,3.8 H5.6 L6.9,5.2 H13.4 V15.4 H0.5Z" fill="#f3c95a" stroke="#cf8f28" stroke-width="0.9"/>
<path d="M3.4,8.2 H15.6 L13.2,15.4 H0.5Z" fill="#fbe394" stroke="#cf9330" stroke-width="0.9"/><path d="M3.9,9.3 H14.6" stroke="#fff7d6" stroke-width="0.9"/></svg>
<div class="t" style="left:111.30px;top:719.30px;font-size:14px;color:#c9c9c9;letter-spacing:0.129px;">Scanner Profiles</div>
<svg class="a" style="left:38.5px;top:745.5px;" width="9" height="9" viewBox="0 0 9 9"><path d="M0.7,0.3 L8.7,4.15 L0.7,8Z" fill="#8c8c8c"/></svg>
<svg class="a" style="left:56px;top:740.5px;" width="17" height="17" viewBox="0 0 17 17"><path d="M0.5,3.8 H5.6 L6.9,5.2 H13.4 V15.4 H0.5Z" fill="#f3c95a" stroke="#cf8f28" stroke-width="0.9"/>
<path d="M3.4,8.2 H15.6 L13.2,15.4 H0.5Z" fill="#fbe394" stroke="#cf9330" stroke-width="0.9"/><path d="M3.9,9.3 H14.6" stroke="#fff7d6" stroke-width="0.9"/></svg>
<div class="t" style="left:79.30px;top:741.55px;font-size:14px;color:#c9c9c9;letter-spacing:-0.147px;">Processes</div>
<svg class="a" style="left:56px;top:762.75px;" width="17" height="17" viewBox="0 0 17 17"><path d="M0.5,3.8 H5.6 L6.9,5.2 H13.4 V15.4 H0.5Z" fill="#f3c95a" stroke="#cf8f28" stroke-width="0.9"/>
<path d="M3.4,8.2 H15.6 L13.2,15.4 H0.5Z" fill="#fbe394" stroke="#cf9330" stroke-width="0.9"/><path d="M3.9,9.3 H14.6" stroke="#fff7d6" stroke-width="0.9"/></svg>
<div class="t" style="left:79.30px;top:763.80px;font-size:14px;color:#c9c9c9;letter-spacing:0.140px;">Queues</div>
<svg class="a" style="left:38.5px;top:790.0px;" width="9" height="9" viewBox="0 0 9 9"><path d="M0.7,0.3 L8.7,4.15 L0.7,8Z" fill="#8c8c8c"/></svg>
<svg class="a" style="left:56px;top:785.0px;" width="17" height="17" viewBox="0 0 17 17"><path d="M0.5,3.8 H5.6 L6.9,5.2 H13.4 V15.4 H0.5Z" fill="#f3c95a" stroke="#cf8f28" stroke-width="0.9"/>
<path d="M3.4,8.2 H15.6 L13.2,15.4 H0.5Z" fill="#fbe394" stroke="#cf9330" stroke-width="0.9"/><path d="M3.9,9.3 H14.6" stroke="#fff7d6" stroke-width="0.9"/></svg>
<div class="t" style="left:79.30px;top:786.05px;font-size:14px;color:#c9c9c9;letter-spacing:-0.072px;">File Stores</div>
<svg class="a" style="left:38.5px;top:812.25px;" width="9" height="9" viewBox="0 0 9 9"><path d="M0.7,0.3 L8.7,4.15 L0.7,8Z" fill="#8c8c8c"/></svg>
<svg class="a" style="left:56px;top:807.25px;" width="17" height="17" viewBox="0 0 17 17"><path d="M0.5,3.8 H5.6 L6.9,5.2 H13.4 V15.4 H0.5Z" fill="#f3c95a" stroke="#cf8f28" stroke-width="0.9"/>
<path d="M3.4,8.2 H15.6 L13.2,15.4 H0.5Z" fill="#fbe394" stroke="#cf9330" stroke-width="0.9"/><path d="M3.9,9.3 H14.6" stroke="#fff7d6" stroke-width="0.9"/></svg>
<div class="t" style="left:79.30px;top:808.30px;font-size:14px;color:#c9c9c9;letter-spacing:0.254px;">Machines</div>
<div class="a" style="left:513px;top:61px;width:102px;height:28px;background:#181818;border-radius:5px;"></div>
<div class="a" style="left:622px;top:61px;width:78px;height:28px;background:#1e1e1e;border-radius:5px 5px 0 0;"></div>
<div class="a" style="left:708px;top:61px;width:102px;height:28px;background:#181818;border-radius:5px;"></div>
<div class="t" style="left:530.20px;top:68.90px;font-size:14.3px;color:#6c6c6c;font-weight:700;letter-spacing:0.135px;">Data Rule</div>
<div class="t" style="left:640.00px;top:68.90px;font-size:14.3px;color:#f0f0f0;font-weight:700;letter-spacing:0.220px;">Tester</div>
<div class="t" style="left:724.90px;top:68.90px;font-size:14.3px;color:#6c6c6c;font-weight:700;letter-spacing:0.035px;">Advanced</div>
<div class="a" style="left:513px;top:89px;width:487px;height:975px;background:#1e1e1e;"></div>
<div class="t" style="left:529.00px;top:103.66px;font-size:13.4px;color:#a8a8a8;letter-spacing:-0.405px;">TEST BATCH</div>
<div class="a" style="left:513px;top:129px;width:487px;height:1px;background:#3c3c3c;"></div>
<svg class="a" style="left:910px;top:99px;" width="24" height="20" viewBox="0 0 24 20"><g fill="#bdbdbd"><rect x="1.4" y="1.1" width="7.3" height="7.7"/><rect x="14.7" y="1.1" width="7.3" height="7.7"/><rect x="14.7" y="11" width="7.3" height="7.8"/></g><path d="M8.7,4.4 H14.7 M12,4.4 V14.8 H14.7" stroke="#bdbdbd" stroke-width="1.8" fill="none"/></svg>
<svg class="a" style="left:937px;top:99px;" width="20" height="20" viewBox="0 0 20 20"><rect x="1" y="1" width="18" height="17.8" rx="2.5" fill="#6e6e6e"/><g fill="#1e1e1e"><rect x="4.7" y="8" width="2.2" height="6.8"/><rect x="8.9" y="5" width="2" height="9.8"/><rect x="13.1" y="11.3" width="1.8" height="3.5"/></g></svg>
<svg class="a" style="left:960px;top:97px;" width="24" height="24" viewBox="0 0 24 24"><circle cx="11.8" cy="11.9" r="10.2" fill="#bdbdbd"/><path d="M9.2,8 L16,11.9 L9.2,16.1Z" fill="#1e1e1e"/></svg>
<svg class="a" style="left:516px;top:162px;" width="12" height="10" viewBox="0 0 12 10"><path d="M0.5,0.6 H10.5 L5.5,9.8Z" fill="#8a8a8a"/></svg>
<svg class="a" style="left:540px;top:145px;" width="58" height="46" viewBox="0 0 58 46"><path d="M4,6.5 a2.5,2.5 0 0 1 2.5,-2.5 H20 L26,9.3 H51.5 a2.5,2.5 0 0 1 2.5,2.5 V39.5 a2.5,2.5 0 0 1 -2.5,2.5 H6.5 a2.5,2.5 0 0 1 -2.5,-2.5Z" stroke="#eeeeee" stroke-width="4.2" fill="none" stroke-linejoin="round"/></svg>
<div class="t" style="left:604.40px;top:159.90px;font-size:14.3px;color:#c9c9c9;letter-spacing:0.015px;">02 - Data Rules - Intangibles Table</div>
<svg class="a" style="left:580px;top:236.5px;" width="12" height="12" viewBox="0 0 12 12"><path d="M0.5,0.8 L10.8,5.9 L0.5,11Z" fill="#8a8a8a"/></svg>
<svg class="a" style="left:609px;top:210.7px;" width="50" height="66" viewBox="0 0 50 66"><path d="M6.7,2.2 H30 L46.5,18.5 V55.5 a6.5,6.5 0 0 1 -6.5,6.5 H8.7 a6.5,6.5 0 0 1 -6.5,-6.5 V8.7 a6.5,6.5 0 0 1 6.5,-6.5Z" stroke="#eeeeee" stroke-width="4.2" fill="none" stroke-linejoin="round"/><path d="M29.5,2.5 V14 a4.5,4.5 0 0 0 4.5,4.5 H46.3Z" fill="#eeeeee"/><g stroke="#eeeeee" stroke-width="4" stroke-linecap="round"><path d="M14,30 H34 M14,38 H34 M14,46 H22.5"/></g></svg>
<div class="t" style="left:668.60px;top:226.70px;font-size:14.3px;color:#c9c9c9;letter-spacing:0.038px;">Intangibles (1)</div>
<svg class="a" style="left:668px;top:244px;" width="17" height="17" viewBox="0 0 17 17"><path d="M3,1 H13 L15.5,3.5 V16 H3Z" fill="#f5f5f5" stroke="#cfcfcf" stroke-width="0.6"/><rect x="0.5" y="2.8" width="10" height="3.6" fill="#e21b0a"/><path d="M8.5,7.5 Q8,11 5,14 M8.5,10 Q10,12.5 13.5,13 M5.5,13 H11.5" stroke="#e0301e" stroke-width="1" fill="none"/></svg>
<div class="t" style="left:687.80px;top:248.04px;font-size:12px;color:#9a9a9a;font-style:italic;letter-spacing:-0.169px;">Intangibles - Missing Cells.pdf</div>
<div class="a" style="left:596px;top:281px;width:396px;height:74px;background:#262626;border:1.5px solid #19a9b1;border-radius:4px;box-sizing:border-box;"></div>
<svg class="a" style="left:580px;top:311.5px;" width="12" height="12" viewBox="0 0 12 12"><path d="M0.5,0.8 L10.8,5.9 L0.5,11Z" fill="#8a8a8a"/></svg>
<svg class="a" style="left:609px;top:285.7px;" width="50" height="66" viewBox="0 0 50 66"><path d="M6.7,2.2 H30 L46.5,18.5 V55.5 a6.5,6.5 0 0 1 -6.5,6.5 H8.7 a6.5,6.5 0 0 1 -6.5,-6.5 V8.7 a6.5,6.5 0 0 1 6.5,-6.5Z" stroke="#eeeeee" stroke-width="4.2" fill="none" stroke-linejoin="round"/><path d="M29.5,2.5 V14 a4.5,4.5 0 0 0 4.5,4.5 H46.3Z" fill="#eeeeee"/><g stroke="#eeeeee" stroke-width="4" stroke-linecap="round"><path d="M14,30 H34 M14,38 H34 M14,46 H22.5"/></g></svg>
<div class="t" style="left:668.60px;top:301.70px;font-size:14.3px;color:#f4f4f4;letter-spacing:0.038px;">Intangibles (2)</div>
<svg class="a" style="left:668px;top:319px;" width="17" height="17" viewBox="0 0 17 17"><path d="M3,1 H13 L15.5,3.5 V16 H3Z" fill="#f5f5f5" stroke="#cfcfcf" stroke-width="0.6"/><rect x="0.5" y="2.8" width="10" height="3.6" fill="#e21b0a"/><path d="M8.5,7.5 Q8,11 5,14 M8.5,10 Q10,12.5 13.5,13 M5.5,13 H11.5" stroke="#e0301e" stroke-width="1" fill="none"/></svg>
<div class="t" style="left:687.80px;top:323.04px;font-size:12px;color:#f0f0f0;font-style:italic;letter-spacing:-0.076px;">Intangibles - Missing Cells with Bad Grand Total.pdf</div>
<svg class="a" style="left:580px;top:386.5px;" width="12" height="12" viewBox="0 0 12 12"><path d="M0.5,0.8 L10.8,5.9 L0.5,11Z" fill="#8a8a8a"/></svg>
<svg class="a" style="left:609px;top:360.7px;" width="50" height="66" viewBox="0 0 50 66"><path d="M6.7,2.2 H30 L46.5,18.5 V55.5 a6.5,6.5 0 0 1 -6.5,6.5 H8.7 a6.5,6.5 0 0 1 -6.5,-6.5 V8.7 a6.5,6.5 0 0 1 6.5,-6.5Z" stroke="#eeeeee" stroke-width="4.2" fill="none" stroke-linejoin="round"/><path d="M29.5,2.5 V14 a4.5,4.5 0 0 0 4.5,4.5 H46.3Z" fill="#eeeeee"/><g stroke="#eeeeee" stroke-width="4" stroke-linecap="round"><path d="M14,30 H34 M14,38 H34 M14,46 H22.5"/></g></svg>
<div class="t" style="left:668.60px;top:376.70px;font-size:14.3px;color:#c9c9c9;letter-spacing:0.038px;">Intangibles (3)</div>
<svg class="a" style="left:668px;top:394px;" width="17" height="17" viewBox="0 0 17 17"><path d="M3,1 H13 L15.5,3.5 V16 H3Z" fill="#f5f5f5" stroke="#cfcfcf" stroke-width="0.6"/><rect x="0.5" y="2.8" width="10" height="3.6" fill="#e21b0a"/><path d="M8.5,7.5 Q8,11 5,14 M8.5,10 Q10,12.5 13.5,13 M5.5,13 H11.5" stroke="#e0301e" stroke-width="1" fill="none"/></svg>
<div class="t" style="left:687.80px;top:398.04px;font-size:12px;color:#9a9a9a;font-style:italic;letter-spacing:-0.081px;">Intangibles - Missing Cells with Grand Total.pdf</div>
<div class="a" style="left:1006px;top:89px;width:898px;height:780px;background:#1e1e1e;"></div>
<div class="a" style="left:1006px;top:89px;width:693px;height:36px;background:repeating-linear-gradient(45deg,#262626 0px,#262626 3.1px,#1d1d1d 3.1px,#1d1d1d 6.2px);border-top:1px solid #555;border-bottom:1px solid #555;box-sizing:border-box;"></div>
<div class="t" style="left:1022.00px;top:99.13px;font-size:16.5px;color:#d2d2d2;font-weight:700;letter-spacing:0.081px;">Intangibles (2)</div>
<div class="a" style="left:1175px;top:133px;width:200px;height:24.5px;background:#292929;border-radius:4px;"></div>
<div class="t" style="left:1022.30px;top:138.64px;font-size:14.6px;color:#c9c9c9;letter-spacing:0.131px;">Grand Total</div>
<div class="t" style="left:1280.00px;top:138.64px;font-size:14.6px;color:#ececec;letter-spacing:-0.138px;">$1,111,000.00</div>
<div class="a" style="left:1175px;top:162px;width:100px;height:24.5px;background:#292929;border-radius:4px;"></div>
<div class="t" style="left:1022.30px;top:167.64px;font-size:14.6px;color:#c9c9c9;letter-spacing:-0.237px;">Full Date</div>
<div class="t" style="left:1193.00px;top:167.64px;font-size:14.6px;color:#ececec;letter-spacing:-0.121px;">1/14/2021</div>
<div class="a" style="left:1175px;top:191px;width:100px;height:24.5px;background:#292929;border-radius:4px;"></div>
<div class="t" style="left:1022.30px;top:196.64px;font-size:14.6px;color:#c9c9c9;letter-spacing:0.478px;">Month</div>
<div class="a" style="left:1175px;top:220px;width:100px;height:24.5px;background:#292929;border-radius:4px;"></div>
<div class="t" style="left:1022.30px;top:225.64px;font-size:14.6px;color:#c9c9c9;letter-spacing:-0.744px;">Day</div>
<div class="a" style="left:1175px;top:249px;width:100px;height:24.5px;background:#292929;border-radius:4px;"></div>
<div class="t" style="left:1022.30px;top:254.64px;font-size:14.6px;color:#c9c9c9;letter-spacing:-0.331px;">Year</div>
<div class="a" style="left:1010.5px;top:127.5px;width:375px;height:35px;background:transparent;border:2px solid #ffff00;box-sizing:border-box;"></div>
<div class="t" style="left:1022.50px;top:281.63px;font-size:16.5px;color:#d2d2d2;font-weight:700;letter-spacing:0.682px;">Intangibles Table</div>
<div class="t" style="left:1147.65px;top:309.05px;font-size:14px;color:#b8b8b8;letter-spacing:0.370px;">Description</div>
<div class="t" style="left:1361.25px;top:309.05px;font-size:14px;color:#b8b8b8;letter-spacing:-0.120px;">Code</div>
<div class="t" style="left:1445.75px;top:309.05px;font-size:14px;color:#b8b8b8;letter-spacing:0.234px;">Dry Hole</div>
<div class="t" style="left:1522.00px;top:309.05px;font-size:14px;color:#b8b8b8;letter-spacing:0.484px;">Completion</div>
<div class="t" style="left:1630.45px;top:309.05px;font-size:14px;color:#b8b8b8;letter-spacing:0.390px;">Total</div>
<svg class="a" style="left:1027px;top:344px;" width="12" height="8" viewBox="0 0 12 8"><path d="M0.5,0.5 H7.5 L10.5,3.5 L7.5,6.5 H0.5Z" fill="#5c5c5c"/></svg>
<div class="a" style="left:1047px;top:335px;width:275px;height:25px;background:#292929;border-radius:4px;"></div>
<div class="a" style="left:1328px;top:335px;width:100px;height:25px;background:#292929;border-radius:4px;"></div>
<div class="a" style="left:1434px;top:335px;width:80px;height:25px;background:#292929;border-radius:4px;"></div>
<div class="a" style="left:1520px;top:335px;width:80px;height:25px;background:#292929;border-radius:4px;"></div>
<div class="a" style="left:1606px;top:335px;width:80px;height:25px;background:#292929;border-radius:4px;"></div>
<div class="t" style="left:1052.20px;top:341.74px;font-size:13.3px;color:#ececec;letter-spacing:-0.317px;">LEGAL &amp; RECORDING FEES</div>
<div class="t" style="left:1349.80px;top:341.15px;font-size:14px;color:#ececec;letter-spacing:0.157px;">5000010</div>
<div class="t" style="left:1439.60px;top:341.15px;font-size:14px;color:#ececec;letter-spacing:-0.044px;">$19,000.00</div>
<div class="t" style="left:1611.90px;top:341.15px;font-size:14px;color:#ececec;letter-spacing:-0.044px;">$19,000.00</div>
<svg class="a" style="left:1027px;top:375px;" width="12" height="8" viewBox="0 0 12 8"><path d="M0.5,0.5 H7.5 L10.5,3.5 L7.5,6.5 H0.5Z" fill="#5c5c5c"/></svg>
<div class="a" style="left:1047px;top:366px;width:275px;height:25px;background:#292929;border-radius:4px;"></div>
<div class="a" style="left:1328px;top:366px;width:100px;height:25px;background:#292929;border-radius:4px;"></div>
<div class="a" style="left:1434px;top:366px;width:80px;height:25px;background:#292929;border-radius:4px;"></div>
<div class="a" style="left:1520px;top:366px;width:80px;height:25px;background:#292929;border-radius:4px;"></div>
<div class="a" style="left:1606px;top:366px;width:80px;height:25px;background:#292929;border-radius:4px;"></div>
<div class="t" style="left:1052.20px;top:372.74px;font-size:13.3px;color:#ececec;letter-spacing:-0.214px;">WELL SITE DAMAGES &amp; PREEMPTIVE PAY</div>
<div class="a" style="left:1316.3px;top:374.6px;width:1.3px;height:9.4px;background:#c8d8e8;"></div>
<div class="t" style="left:1349.80px;top:372.15px;font-size:14px;color:#ececec;letter-spacing:0.157px;">5000020</div>
<div class="t" style="left:1447.33px;top:372.15px;font-size:14px;color:#ececec;letter-spacing:-0.054px;">$5,000.00</div>
<div class="t" style="left:1619.63px;top:372.15px;font-size:14px;color:#ececec;letter-spacing:-0.054px;">$5,000.00</div>
<svg class="a" style="left:1027px;top:406px;" width="12" height="8" viewBox="0 0 12 8"><path d="M0.5,0.5 H7.5 L10.5,3.5 L7.5,6.5 H0.5Z" fill="#5c5c5c"/></svg>
<div class="a" style="left:1047px;top:397px;width:275px;height:25px;background:#292929;border-radius:4px;"></div>
<div class="a" style="left:1328px;top:397px;width:100px;height:25px;background:#292929;border-radius:4px;"></div>
<div class="a" style="left:1434px;top:397px;width:80px;height:25px;background:#292929;border-radius:4px;"></div>
<div class="a" style="left:1520px;top:397px;width:80px;height:25px;background:#292929;border-radius:4px;"></div>
<div class="a" style="left:1606px;top:397px;width:80px;height:25px;background:#292929;border-radius:4px;"></div>
<div class="t" style="left:1052.20px;top:403.74px;font-size:13.3px;color:#ececec;letter-spacing:0.067px;">LOCATION &amp; ROAD CONSTRUCTION</div>
<div class="t" style="left:1349.80px;top:403.15px;font-size:14px;color:#ececec;letter-spacing:0.157px;">5000030</div>
<div class="t" style="left:1439.60px;top:403.15px;font-size:14px;color:#ececec;letter-spacing:-0.044px;">$53,250.00</div>
<div class="t" style="left:1525.90px;top:403.15px;font-size:14px;color:#ececec;letter-spacing:-0.044px;">$37,500.00</div>
<div class="t" style="left:1611.90px;top:403.15px;font-size:14px;color:#ececec;letter-spacing:-0.044px;">$90,750.00</div>
<svg class="a" style="left:1027px;top:437px;" width="12" height="8" viewBox="0 0 12 8"><path d="M0.5,0.5 H7.5 L10.5,3.5 L7.5,6.5 H0.5Z" fill="#5c5c5c"/></svg>
<div class="a" style="left:1047px;top:428px;width:275px;height:25px;background:#292929;border-radius:4px;"></div>
<div class="a" style="left:1328px;top:428px;width:100px;height:25px;background:#292929;border-radius:4px;"></div>
<div class="a" style="left:1434px;top:428px;width:80px;height:25px;background:#292929;border-radius:4px;"></div>
<div class="a" style="left:1520px;top:428px;width:80px;height:25px;background:#292929;border-radius:4px;"></div>
<div class="a" style="left:1606px;top:428px;width:80px;height:25px;background:#292929;border-radius:4px;"></div>
<div class="t" style="left:1052.20px;top:434.74px;font-size:13.3px;color:#ececec;letter-spacing:0.016px;">RESTORATION / RECLAIMATION - FINAL</div>
<div class="t" style="left:1349.80px;top:434.15px;font-size:14px;color:#ececec;letter-spacing:0.157px;">5000031</div>
<div class="t" style="left:1447.33px;top:434.15px;font-size:14px;color:#ececec;letter-spacing:-0.054px;">$8,250.00</div>
<div class="t" style="left:1619.63px;top:434.15px;font-size:14px;color:#ececec;letter-spacing:-0.054px;">$8,250.00</div>
<svg class="a" style="left:1027px;top:468px;" width="12" height="8" viewBox="0 0 12 8"><path d="M0.5,0.5 H7.5 L10.5,3.5 L7.5,6.5 H0.5Z" fill="#5c5c5c"/></svg>
<div class="a" style="left:1047px;top:459px;width:275px;height:25px;background:#292929;border-radius:4px;"></div>
<div class="a" style="left:1328px;top:459px;width:100px;height:25px;background:#292929;border-radius:4px;"></div>
<div class="a" style="left:1434px;top:459px;width:80px;height:25px;background:#292929;border-radius:4px;"></div>
<div class="a" style="left:1520px;top:459px;width:80px;height:25px;background:#292929;border-radius:4px;"></div>
<div class="a" style="left:1606px;top:459px;width:80px;height:25px;background:#292929;border-radius:4px;"></div>
<div class="t" style="left:1052.20px;top:465.74px;font-size:13.3px;color:#ececec;letter-spacing:0.060px;">LOCATION &amp; ROAD CONST. - MATERIALS</div>
<div class="t" style="left:1349.80px;top:465.15px;font-size:14px;color:#ececec;letter-spacing:0.157px;">5000032</div>
<div class="t" style="left:1447.33px;top:465.15px;font-size:14px;color:#ececec;letter-spacing:-0.054px;">$1,250.00</div>
<div class="t" style="left:1619.63px;top:465.15px;font-size:14px;color:#ececec;letter-spacing:-0.054px;">$1,250.00</div>
<svg class="a" style="left:1027px;top:499px;" width="12" height="8" viewBox="0 0 12 8"><path d="M0.5,0.5 H7.5 L10.5,3.5 L7.5,6.5 H0.5Z" fill="#5c5c5c"/></svg>
<div class="a" style="left:1047px;top:490px;width:275px;height:25px;background:#292929;border-radius:4px;"></div>
<div class="a" style="left:1328px;top:490px;width:100px;height:25px;background:#292929;border-radius:4px;"></div>
<div class="a" style="left:1434px;top:490px;width:80px;height:25px;background:#292929;border-radius:4px;"></div>
<div class="a" style="left:1520px;top:490px;width:80px;height:25px;background:#292929;border-radius:4px;"></div>
<div class="a" style="left:1606px;top:490px;width:80px;height:25px;background:#292929;border-radius:4px;"></div>
<div class="t" style="left:1052.20px;top:496.74px;font-size:13.3px;color:#ececec;letter-spacing:-0.531px;">RIG COSTS</div>
<div class="t" style="left:1349.80px;top:496.15px;font-size:14px;color:#ececec;letter-spacing:0.157px;">5000060</div>
<div class="t" style="left:1439.60px;top:496.15px;font-size:14px;color:#ececec;letter-spacing:-0.044px;">$316,000.0</div>
<div class="t" style="left:1525.90px;top:496.15px;font-size:14px;color:#ececec;letter-spacing:-0.044px;">$130,000.0</div>
<div class="t" style="left:1611.90px;top:496.15px;font-size:14px;color:#ececec;letter-spacing:-0.044px;">$446,000.0</div>
<svg class="a" style="left:1027px;top:530px;" width="12" height="8" viewBox="0 0 12 8"><path d="M0.5,0.5 H7.5 L10.5,3.5 L7.5,6.5 H0.5Z" fill="#5c5c5c"/></svg>
<div class="a" style="left:1047px;top:521px;width:275px;height:25px;background:#292929;border-radius:4px;"></div>
<div class="a" style="left:1328px;top:521px;width:100px;height:25px;background:#292929;border-radius:4px;"></div>
<div class="a" style="left:1434px;top:521px;width:80px;height:25px;background:#292929;border-radius:4px;"></div>
<div class="a" style="left:1520px;top:521px;width:80px;height:25px;background:#292929;border-radius:4px;"></div>
<div class="a" style="left:1606px;top:521px;width:80px;height:25px;background:#292929;border-radius:4px;"></div>
<div class="t" style="left:1052.20px;top:527.74px;font-size:13.3px;color:#ececec;letter-spacing:0.275px;">RIG MOBILIZATION / DEMOBILIZATION</div>
<div class="t" style="left:1349.80px;top:527.15px;font-size:14px;color:#ececec;letter-spacing:0.157px;">5000061</div>
<div class="t" style="left:1439.60px;top:527.15px;font-size:14px;color:#ececec;letter-spacing:-0.044px;">$74,750.00</div>
<div class="t" style="left:1611.90px;top:527.15px;font-size:14px;color:#ececec;letter-spacing:-0.044px;">$74,750.00</div>
<svg class="a" style="left:1027px;top:561px;" width="12" height="8" viewBox="0 0 12 8"><path d="M0.5,0.5 H7.5 L10.5,3.5 L7.5,6.5 H0.5Z" fill="#5c5c5c"/></svg>
<div class="a" style="left:1047px;top:552px;width:275px;height:25px;background:#292929;border-radius:4px;"></div>
<div class="a" style="left:1328px;top:552px;width:100px;height:25px;background:#292929;border-radius:4px;"></div>
<div class="a" style="left:1434px;top:552px;width:80px;height:25px;background:#292929;border-radius:4px;"></div>
<div class="a" style="left:1520px;top:552px;width:80px;height:25px;background:#292929;border-radius:4px;"></div>
<div class="a" style="left:1606px;top:552px;width:80px;height:25px;background:#292929;border-radius:4px;"></div>
<div class="t" style="left:1052.20px;top:558.74px;font-size:13.3px;color:#ececec;letter-spacing:-0.315px;">RIG COST -CTU</div>
<div class="t" style="left:1349.80px;top:558.15px;font-size:14px;color:#ececec;letter-spacing:0.157px;">5000062</div>
<div class="t" style="left:1525.90px;top:558.15px;font-size:14px;color:#ececec;letter-spacing:-0.044px;">$187,600.0</div>
<div class="t" style="left:1611.90px;top:558.15px;font-size:14px;color:#ececec;letter-spacing:-0.044px;">$187,600.0</div>
<svg class="a" style="left:1027px;top:592px;" width="12" height="8" viewBox="0 0 12 8"><path d="M0.5,0.5 H7.5 L10.5,3.5 L7.5,6.5 H0.5Z" fill="#5c5c5c"/></svg>
<div class="a" style="left:1047px;top:583px;width:275px;height:25px;background:#292929;border-radius:4px;"></div>
<div class="a" style="left:1328px;top:583px;width:100px;height:25px;background:#292929;border-radius:4px;"></div>
<div class="a" style="left:1434px;top:583px;width:80px;height:25px;background:#292929;border-radius:4px;"></div>
<div class="a" style="left:1520px;top:583px;width:80px;height:25px;background:#292929;border-radius:4px;"></div>
<div class="a" style="left:1606px;top:583px;width:80px;height:25px;background:#292929;border-radius:4px;"></div>
<div class="t" style="left:1052.20px;top:589.74px;font-size:13.3px;color:#ececec;letter-spacing:-0.446px;">FRESH WATER</div>
<div class="t" style="left:1349.80px;top:589.15px;font-size:14px;color:#ececec;letter-spacing:0.157px;">5000070</div>
<div class="t" style="left:1447.33px;top:589.15px;font-size:14px;color:#ececec;letter-spacing:-0.054px;">$5,000.00</div>
<div class="t" style="left:1525.90px;top:589.15px;font-size:14px;color:#ececec;letter-spacing:-0.044px;">$190,950.0</div>
<div class="t" style="left:1611.90px;top:589.15px;font-size:14px;color:#ececec;letter-spacing:-0.044px;">$195,950.0</div>
<svg class="a" style="left:1027px;top:623px;" width="12" height="8" viewBox="0 0 12 8"><path d="M0.5,0.5 H7.5 L10.5,3.5 L7.5,6.5 H0.5Z" fill="#5c5c5c"/></svg>
<div class="a" style="left:1047px;top:614px;width:275px;height:25px;background:#292929;border-radius:4px;"></div>
<div class="a" style="left:1328px;top:614px;width:100px;height:25px;background:#292929;border-radius:4px;"></div>
<div class="a" style="left:1434px;top:614px;width:80px;height:25px;background:#292929;border-radius:4px;"></div>
<div class="a" style="left:1520px;top:614px;width:80px;height:25px;background:#292929;border-radius:4px;"></div>
<div class="a" style="left:1606px;top:614px;width:80px;height:25px;background:#292929;border-radius:4px;"></div>
<div class="t" style="left:1052.20px;top:620.74px;font-size:13.3px;color:#ececec;letter-spacing:-0.164px;">BRINE WATER</div>
<div class="t" style="left:1349.80px;top:620.15px;font-size:14px;color:#ececec;letter-spacing:0.157px;">5000071</div>
<div class="t" style="left:1439.60px;top:620.15px;font-size:14px;color:#ececec;letter-spacing:-0.044px;">$12,000.00</div>
<div class="t" style="left:1611.90px;top:620.15px;font-size:14px;color:#ececec;letter-spacing:-0.044px;">$12,000.00</div>
<svg class="a" style="left:1027px;top:654px;" width="12" height="8" viewBox="0 0 12 8"><path d="M0.5,0.5 H7.5 L10.5,3.5 L7.5,6.5 H0.5Z" fill="#5c5c5c"/></svg>
<div class="a" style="left:1047px;top:645px;width:275px;height:25px;background:#292929;border-radius:4px;"></div>
<div class="a" style="left:1328px;top:645px;width:100px;height:25px;background:#292929;border-radius:4px;"></div>
<div class="a" style="left:1434px;top:645px;width:80px;height:25px;background:#292929;border-radius:4px;"></div>
<div class="a" style="left:1520px;top:645px;width:80px;height:25px;background:#292929;border-radius:4px;"></div>
<div class="a" style="left:1606px;top:645px;width:80px;height:25px;background:#292929;border-radius:4px;"></div>
<div class="t" style="left:1052.20px;top:651.74px;font-size:13.3px;color:#ececec;letter-spacing:-0.029px;">STIMULATION WATER SUPERVISION</div>
<div class="t" style="left:1349.80px;top:651.15px;font-size:14px;color:#ececec;letter-spacing:0.157px;">5000072</div>
<div class="t" style="left:1533.63px;top:651.15px;font-size:14px;color:#ececec;letter-spacing:-0.054px;">$7,500.00</div>
<div class="t" style="left:1619.63px;top:651.15px;font-size:14px;color:#ececec;letter-spacing:-0.054px;">$7,500.00</div>
<div class="a" style="left:1599px;top:325px;width:94.5px;height:351.5px;background:transparent;border:2px solid #ffff00;box-sizing:border-box;"></div>
<div class="t" style="left:1022.00px;top:694.53px;font-size:16.5px;color:#d2d2d2;font-weight:700;letter-spacing:0.142px;">Copy Section</div>
<div class="t" style="left:1022.00px;top:723.14px;font-size:14.6px;color:#c9c9c9;letter-spacing:-0.053px;">Grand Total Copy</div>
<div class="a" style="left:1173px;top:718px;width:200px;height:25px;background:#292929;border-radius:4px;"></div>
<div class="a" style="left:1006px;top:875px;width:898px;height:43px;background:repeating-linear-gradient(0deg,rgba(255,255,255,0.035) 0 1px,transparent 1px 5px), repeating-linear-gradient(90deg,rgba(255,255,255,0.035) 0 1px,transparent 1px 5px), #212121;"></div>
<svg class="a" style="left:1022px;top:886px;" width="26" height="20" viewBox="0 0 26 20"><path d="M1.8,1 V18 M20.2,1 V18" stroke="#bdbdbd" stroke-width="1.8"/><path d="M5,9.5 H17 M8,6 L4.5,9.5 L8,13 M14,6 L17.5,9.5 L14,13" stroke="#bdbdbd" stroke-width="1.8" fill="none"/></svg>
<svg class="a" style="left:1052px;top:886px;" width="20" height="20" viewBox="0 0 20 20"><rect x="1.8" y="1.8" width="16" height="16" stroke="#bdbdbd" stroke-width="1.7" fill="none" stroke-dasharray="2.2,1.6"/><rect x="5.8" y="5.8" width="8" height="8" stroke="#bdbdbd" stroke-width="1.7" fill="none"/></svg>
<svg class="a" style="left:1081px;top:885px;" width="20" height="22" viewBox="0 0 20 22"><path d="M2,5 V19 H14" stroke="#bdbdbd" stroke-width="1.6" fill="none"/><rect x="4.5" y="1" width="12.8" height="15.5" rx="2" fill="#bdbdbd"/></svg>
<svg class="a" style="left:1368px;top:890px;" width="16" height="14" viewBox="0 0 16 14"><rect x="1" y="1" width="2" height="12" fill="#8a8a8a"/><path d="M14.5,1 V13 L4,7Z" fill="#8a8a8a"/></svg>
<svg class="a" style="left:1399px;top:890px;" width="11" height="14" viewBox="0 0 11 14"><path d="M8.5,1.5 L2.8,7 L8.5,12.5" stroke="#8a8a8a" stroke-width="1.8" fill="none"/></svg>
<div class="a" style="left:1434px;top:883px;width:26px;height:25px;background:transparent;border:1px solid #4e4e4e;border-radius:5px;box-sizing:border-box;"></div>
<div class="t" style="left:1442.58px;top:889.15px;font-size:14px;color:#c8c8c8;">1</div>
<div class="t" style="left:1463.80px;top:889.15px;font-size:14px;color:#c8c8c8;letter-spacing:-0.370px;">/ 1</div>
<svg class="a" style="left:1500px;top:890px;" width="11" height="14" viewBox="0 0 11 14"><path d="M2.5,1.5 L8.2,7 L2.5,12.5" stroke="#8a8a8a" stroke-width="1.8" fill="none"/></svg>
<svg class="a" style="left:1526px;top:890px;" width="16" height="14" viewBox="0 0 16 14"><path d="M1,1 V13 L11.5,7Z" fill="#8a8a8a"/><rect x="12.5" y="1" width="2" height="12" fill="#8a8a8a"/></svg>
<svg class="a" style="left:1789px;top:886px;" width="23" height="20" viewBox="0 0 23 20"><rect x="4.5" y="0.8" width="13" height="3.5" fill="#bdbdbd"/><path d="M0.8,8 a2.5,2.5 0 0 1 2.5,-2.5 H18.7 a2.5,2.5 0 0 1 2.5,2.5 V15 H0.8Z" fill="#bdbdbd"/><rect x="5.5" y="10.5" width="11" height="8.5" fill="#bdbdbd" stroke="#212121" stroke-width="0"/><rect x="7" y="12" width="8" height="5" fill="#212121"/><circle cx="17.5" cy="8.6" r="0.9" fill="#212121"/></svg>
<svg class="a" style="left:1818px;top:885px;" width="22" height="22" viewBox="0 0 22 22"><circle cx="11" cy="11" r="10.2" fill="#bdbdbd"/><rect x="10" y="9" width="2.2" height="7.5" fill="#212121"/><rect x="10" y="5.5" width="2.2" height="2" fill="#212121"/></svg>
<div class="a" style="left:1849px;top:887px;width:1px;height:17px;background:#555;"></div>
<div class="a" style="left:1860px;top:885px;width:28px;height:19px;background:#2b2b2b;border-radius:4px;"></div>
<svg class="a" style="left:1860px;top:886px;" width="28" height="18" viewBox="0 0 28 18"><path d="M2,1.8 H5 L6,2.8 H9 V6.8 H2Z" fill="#e9a93a"/><path d="M2,4 H10 L9,7.5 H2Z" fill="#f7cf6a"/><path d="M5,7.5 V15 H8 M5,10 H8" stroke="#cfcfcf" stroke-width="0.8" fill="none"/><rect x="8.5" y="2.5" width="5" height="6" fill="#fff"/><rect x="8.5" y="10.5" width="5" height="6" fill="#fff"/><path d="M17.6,6 H26 L21.8,13.8Z" fill="#8e8e8e"/></svg>
<div class="a" style="left:1006px;top:918px;width:898px;height:146px;background:#212121;"></div>
<div class="a" style="left:1012px;top:918px;width:878px;height:146px;background:#ffffff;"></div>
<div class="a" style="left:1895.5px;top:918px;width:8.5px;height:31px;background:#1b4d52;border-radius:4px;"></div>
<div class="t" style="left:1640.40px;top:946.77px;font-size:11.5px;color:#111;font-weight:700;letter-spacing:-0.692px;">DATE</div>
<div class="t" style="left:1705.00px;top:946.34px;font-size:12px;color:#222;letter-spacing:0.411px;">01/14/2021</div>
<div class="a" style="left:1092px;top:999px;width:718px;height:1px;background:#7a7a7a;"></div>
<div class="a" style="left:1092px;top:1019px;width:718px;height:1px;background:#7a7a7a;"></div>
<div class="a" style="left:1092px;top:1039px;width:718px;height:1px;background:#7a7a7a;"></div>
<div class="a" style="left:1092px;top:1058.5px;width:718px;height:1px;background:#7a7a7a;"></div>
<div class="a" style="left:1092px;top:999px;width:1px;height:65px;background:#7a7a7a;"></div>
<div class="a" style="left:1385px;top:999px;width:1px;height:65px;background:#7a7a7a;"></div>
<div class="a" style="left:1444px;top:999px;width:1px;height:65px;background:#7a7a7a;"></div>
<div class="a" style="left:1573px;top:999px;width:1px;height:65px;background:#7a7a7a;"></div>
<div class="a" style="left:1699px;top:999px;width:1px;height:65px;background:#7a7a7a;"></div>
<div class="a" style="left:1809px;top:999px;width:1px;height:65px;background:#7a7a7a;"></div>
<div class="t" style="left:1098.75px;top:1002.77px;font-size:11.5px;color:#111;font-weight:700;letter-spacing:-0.455px;">INTANGIBLES</div>
<div class="t" style="left:1391.50px;top:1002.77px;font-size:11.5px;color:#111;font-weight:700;letter-spacing:-0.250px;">Code</div>
<div class="t" style="left:1516.70px;top:1002.77px;font-size:11.5px;color:#111;font-weight:700;letter-spacing:0.391px;">Dry Hole</div>
<div class="t" style="left:1628.50px;top:1002.77px;font-size:11.5px;color:#111;font-weight:700;letter-spacing:0.139px;">Completion</div>
<div class="t" style="left:1775.50px;top:1002.77px;font-size:11.5px;color:#111;font-weight:700;letter-spacing:0.359px;">Total</div>
<div class="t" style="left:1098.75px;top:1023.07px;font-size:11.5px;color:#222;letter-spacing:-0.620px;">LEGAL &amp; RECORDING FEES</div>
<div class="t" style="left:1391.50px;top:1023.07px;font-size:11.5px;color:#222;letter-spacing:0.261px;">5000010</div>
<div class="t" style="left:1523.70px;top:1023.07px;font-size:11.5px;color:#222;letter-spacing:0.247px;">$19,000</div>
<div class="t" style="left:1760.50px;top:1023.07px;font-size:11.5px;color:#222;letter-spacing:0.247px;">$19,000</div>
<div class="t" style="left:1098.75px;top:1042.77px;font-size:11.5px;color:#222;letter-spacing:-0.348px;">WELL SITE DAMAGES &amp; PREEMPTIVE PAYMENTS</div>
<div class="t" style="left:1391.50px;top:1042.77px;font-size:11.5px;color:#222;letter-spacing:0.261px;">5000020</div>
<div class="t" style="left:1530.70px;top:1042.77px;font-size:11.5px;color:#222;letter-spacing:0.162px;">$5,000</div>
<div class="t" style="left:1767.50px;top:1042.77px;font-size:11.5px;color:#222;letter-spacing:0.162px;">$5,000</div>
<div class="t" style="left:1098.75px;top:1062.57px;font-size:11.5px;color:#222;letter-spacing:-0.408px;">LOCATION &amp; ROAD CONSTRUCTION</div>
<div class="t" style="left:1391.50px;top:1062.57px;font-size:11.5px;color:#222;letter-spacing:0.261px;">5000030</div>
<div class="t" style="left:1523.70px;top:1062.57px;font-size:11.5px;color:#222;letter-spacing:0.247px;">$53,250</div>
<div class="t" style="left:1650.00px;top:1062.57px;font-size:11.5px;color:#222;letter-spacing:0.247px;">$37,500</div>
<div class="t" style="left:1760.50px;top:1062.57px;font-size:11.5px;color:#222;letter-spacing:0.247px;">$90,750</div>
<div class="a" style="left:1006px;top:1064px;width:914px;height:16px;background:#131313;"></div>
<svg class="a" style="left:860px;top:124px;" width="152" height="50" viewBox="0 0 152 50"><defs><filter id="sh" x="-20%" y="-40%" width="140%" height="180%"><feDropShadow dx="2" dy="3" stdDeviation="2" flood-color="#000" flood-opacity="0.6"/></filter></defs><g filter="url(#sh)" fill="#f7941d"><circle cx="24" cy="24.7" r="19.5"/><rect x="40" y="22.5" width="77" height="5"/><path d="M115.8,15 L148,24.75 L115.8,34.75Z"/></g><path d="M18.8,15.7 H27.1 V32.7 H22.2 V19 H18.8 Z" fill="#fff"/></svg>
<svg class="a" style="left:1596px;top:174px;" width="50" height="152" viewBox="0 0 50 152"><defs><filter id="sh2" x="-40%" y="-20%" width="180%" height="140%"><feDropShadow dx="2" dy="3" stdDeviation="2" flood-color="#000" flood-opacity="0.6"/></filter></defs><g filter="url(#sh2)" fill="#f7941d"><circle cx="24" cy="23.8" r="19.5"/><rect x="21.6" y="40" width="5" height="78"/><path d="M14.6,116.3 L34.3,116.3 L24.5,148.4Z"/></g><text x="24" y="32.5" text-anchor="middle" font-family="Liberation Sans" font-weight="700" font-size="23" fill="#fff">2</text></svg>
</body></html>
